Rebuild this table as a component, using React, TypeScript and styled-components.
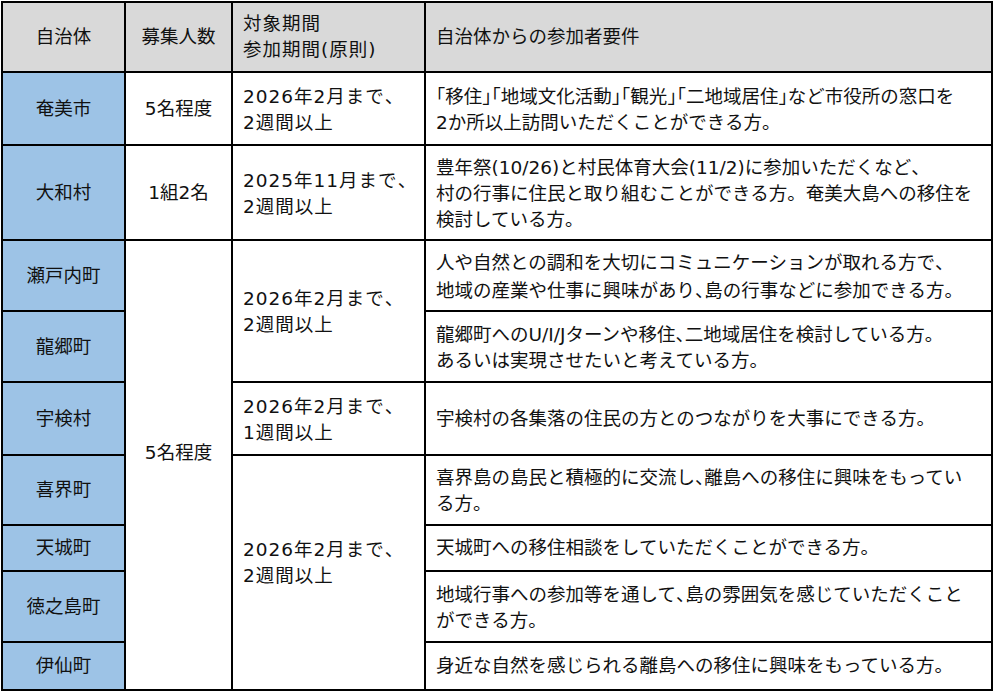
import React from "react";
import styled, { createGlobalStyle } from "styled-components";

const GlobalStyle = createGlobalStyle`
  html, body {
    margin: 0;
    padding: 0;
    background: #ffffff;
  }
  body {
    font-family: "DejaVu Sans", "Noto Sans CJK JP", "Noto Sans", sans-serif;
    color: #111111;
  }
`;

const Page = styled.div`
  padding: 1px 0 0 1px;
`;

const Table = styled.table`
  border-collapse: collapse;
  table-layout: fixed;
  width: 990px;
  font-size: 18.5px;
  line-height: 26px;
`;

const Col = styled.col<{ $w: number }>`
  width: ${(p) => p.$w}px;
`;

const Row = styled.tr<{ $h: number }>`
  height: ${(p) => p.$h}px;
`;

const HeadCell = styled.th<{ $align?: "left" | "center"; $track?: boolean }>`
  border: 2px solid #000;
  background: #d9d9d9;
  font-weight: 400;
  text-align: ${(p) => p.$align ?? "center"};
  vertical-align: middle;
  padding: 0 10px;
  white-space: nowrap;
  letter-spacing: ${(p) => (p.$track ? "1px" : "normal")};
`;

const NameCell = styled.td`
  border: 2px solid #000;
  background: #9dc3e6;
  text-align: center;
  vertical-align: middle;
  padding: 0;
  white-space: nowrap;
`;

const Cell = styled.td<{ $align?: "left" | "center"; $lift?: number; $track?: boolean }>`
  border: 2px solid #000;
  background: #ffffff;
  text-align: ${(p) => p.$align ?? "left"};
  vertical-align: middle;
  padding: 0 10px ${(p) => (p.$lift ?? 0) * 2}px 10px;
  white-space: nowrap;
  letter-spacing: ${(p) => (p.$track ? "1px" : "normal")};
`;

const Punct = styled.span`
  font-family: "Noto Sans CJK JP", sans-serif;
  font-feature-settings: "halt";
`;

const PUNCT = /([「」、（）])/;

const Text: React.FC<{ value: string }> = ({ value }) => (
  <>
    {value.split(PUNCT).map((part, i) =>
      PUNCT.test(part) && part.length === 1 ? (
        <Punct key={i}>{part}</Punct>
      ) : (
        <React.Fragment key={i}>{part}</React.Fragment>
      )
    )}
  </>
);

const Lines: React.FC<{ lines: string[] }> = ({ lines }) => (
  <>
    {lines.map((l, i) => (
      <React.Fragment key={i}>
        {i > 0 && <br />}
        <Text value={l} />
      </React.Fragment>
    ))}
  </>
);

export default function App() {
  return (
    <Page>
      <GlobalStyle />
      <Table>
        <colgroup>
          <Col $w={123} />
          <Col $w={107} />
          <Col $w={193} />
          <Col $w={567} />
        </colgroup>
        <thead>
          <Row $h={70}>
            <HeadCell>自治体</HeadCell>
            <HeadCell>募集人数</HeadCell>
            <HeadCell $align="left" $track>
              <Lines lines={["対象期間", "参加期間(原則)"]} />
            </HeadCell>
            <HeadCell $align="left">自治体からの参加者要件</HeadCell>
          </Row>
        </thead>
        <tbody>
          <Row $h={73}>
            <NameCell>奄美市</NameCell>
            <Cell $align="center">5名程度</Cell>
            <Cell $track>
              <Lines lines={["2026年2月まで、", "2週間以上"]} />
            </Cell>
            <Cell>
              <Lines
                lines={[
                  "「移住」「地域文化活動」「観光」「二地域居住」など市役所の窓口を",
                  "2か所以上訪問いただくことができる方。",
                ]}
              />
            </Cell>
          </Row>
          <Row $h={95}>
            <NameCell>大和村</NameCell>
            <Cell $align="center">1組2名</Cell>
            <Cell $track>
              <Lines lines={["2025年11月まで、", "2週間以上"]} />
            </Cell>
            <Cell>
              <Lines
                lines={[
                  "豊年祭(10/26)と村民体育大会(11/2)に参加いただくなど、",
                  "村の行事に住民と取り組むことができる方。奄美大島への移住を",
                  "検討している方。",
                ]}
              />
            </Cell>
          </Row>
          <Row $h={71}>
            <NameCell>瀬戸内町</NameCell>
            <Cell $align="center" rowSpan={7} $lift={12}>
              5名程度
            </Cell>
            <Cell rowSpan={2} $track>
              <Lines lines={["2026年2月まで、", "2週間以上"]} />
            </Cell>
            <Cell>
              <Lines
                lines={[
                  "人や自然との調和を大切にコミュニケーションが取れる方で、",
                  "地域の産業や仕事に興味があり、島の行事などに参加できる方。",
                ]}
              />
            </Cell>
          </Row>
          <Row $h={71}>
            <NameCell>龍郷町</NameCell>
            <Cell>
              <Lines
                lines={[
                  "龍郷町へのU/I/Jターンや移住、二地域居住を検討している方。",
                  "あるいは実現させたいと考えている方。",
                ]}
              />
            </Cell>
          </Row>
          <Row $h={73}>
            <NameCell>宇検村</NameCell>
            <Cell $track>
              <Lines lines={["2026年2月まで、", "1週間以上"]} />
            </Cell>
            <Cell>
              <Lines lines={["宇検村の各集落の住民の方とのつながりを大事にできる方。"]} />
            </Cell>
          </Row>
          <Row $h={70}>
            <NameCell>喜界町</NameCell>
            <Cell rowSpan={4} $lift={11} $track>
              <Lines lines={["2026年2月まで、", "2週間以上"]} />
            </Cell>
            <Cell>
              <Lines
                lines={[
                  "喜界島の島民と積極的に交流し、離島への移住に興味をもってい",
                  "る方。",
                ]}
              />
            </Cell>
          </Row>
          <Row $h={46}>
            <NameCell>天城町</NameCell>
            <Cell>
              <Lines lines={["天城町への移住相談をしていただくことができる方。"]} />
            </Cell>
          </Row>
          <Row $h={71}>
            <NameCell>徳之島町</NameCell>
            <Cell>
              <Lines
                lines={[
                  "地域行事への参加等を通して、島の雰囲気を感じていただくこと",
                  "ができる方。",
                ]}
              />
            </Cell>
          </Row>
          <Row $h={48}>
            <NameCell>伊仙町</NameCell>
            <Cell>
              <Lines lines={["身近な自然を感じられる離島への移住に興味をもっている方。"]} />
            </Cell>
          </Row>
        </tbody>
      </Table>
    </Page>
  );
}
